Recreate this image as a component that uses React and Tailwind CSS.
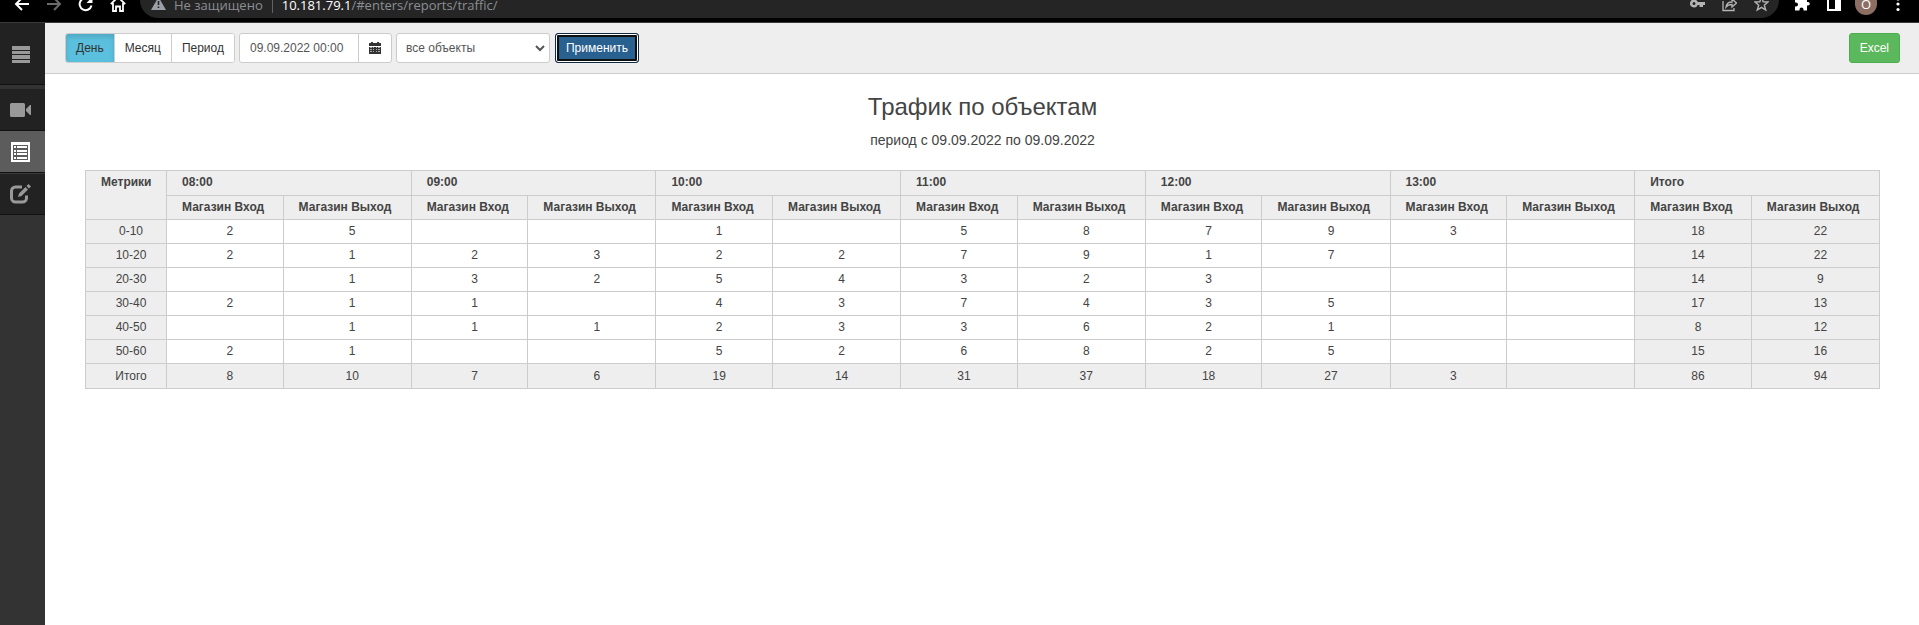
import { useState } from 'react';

const HOURS = ['08:00', '09:00', '10:00', '11:00', '12:00', '13:00', 'Итого'];

const ROWS = [
  ['0-10', 2, 5, '', '', 1, '', 5, 8, 7, 9, 3, '', 18, 22],
  ['10-20', 2, 1, 2, 3, 2, 2, 7, 9, 1, 7, '', '', 14, 22],
  ['20-30', '', 1, 3, 2, 5, 4, 3, 2, 3, '', '', '', 14, 9],
  ['30-40', 2, 1, 1, '', 4, 3, 7, 4, 3, 5, '', '', 17, 13],
  ['40-50', '', 1, 1, 1, 2, 3, 3, 6, 2, 1, '', '', 8, 12],
  ['50-60', 2, 1, '', '', 5, 2, 6, 8, 2, 5, '', '', 15, 16],
];

const TOTALS = ['Итого', 8, 10, 7, 6, 19, 14, 31, 37, 18, 27, 3, '', 86, 94];

function BrowserBar() {
  return (
    <header className="flex h-[23px] items-start border-b border-[#3a3a3a] bg-black">
      <nav className="flex w-[140px] shrink-0 text-white">
        <button aria-label="Назад" className="ml-[14px]">
          <svg width="16" height="12" viewBox="0 0 16 12" fill="none" stroke="currentColor" strokeWidth="2">
            <path d="M15 4H2.5M8 -2L2 4L8 10" />
          </svg>
        </button>
        <button aria-label="Вперёд" className="ml-[16px] text-[#6b6b6b]">
          <svg width="16" height="12" viewBox="0 0 16 12" fill="none" stroke="currentColor" strokeWidth="2">
            <path d="M1 4H13.5M8 -2L14 4L8 10" />
          </svg>
        </button>
        <button aria-label="Обновить" className="ml-[16px]">
          <svg width="16" height="12" viewBox="0 0 16 12" fill="none" stroke="currentColor" strokeWidth="2">
            <path d="M13.5 5.5A6 6 0 1 1 12 0" />
            <path d="M14.500 -3V3H8.500Z" fill="currentColor" stroke="none" />
          </svg>
        </button>
        <button aria-label="Домой" className="ml-[16px]">
          <svg width="16" height="12" viewBox="0 0 16 12" fill="none" stroke="currentColor" strokeWidth="1.8">
            <path d="M0.800 4.200L8 -3L15.200 4.200M3 3V11H6V6.500H10V11H13V3" />
          </svg>
        </button>
      </nav>
      <div className="flex h-[18px] min-w-0 grow items-start rounded-b-[18px] bg-[#252525] pr-[10px] pl-[11px]">
        <svg width="15" height="12" viewBox="0 0 15 12" className="shrink-0">
          <path d="M7.500 -3L15 10H0Z" fill="#9aa0a6" />
          <path d="M6.700 1h1.600v4H6.700zM6.700 6.500h1.600V8H6.700z" fill="#252525" />
        </svg>
        <p className="ml-2 flex h-[18px] grow items-center pb-[9px] font-['Open_Sans','Noto_Sans',sans-serif] text-[13px] leading-[18px] whitespace-nowrap text-[#8b8f93]">
          <span>Не защищено</span>
          <span className="mx-[9px] h-4 w-px bg-[#5f6368]" />
          <span className="text-white">10.181.79.1</span>
          <span>/#enters/reports/traffic/</span>
        </p>
        <div className="flex gap-[17px] text-[#b4b4b4]">
          <svg width="15" height="12" viewBox="0 0 15 12" fill="currentColor">
            <path fillRule="evenodd" d="M4 -.5A4 4 0 1 0 7.700 5H9.500V7H13V5H15V2H7.700A4 4 0 0 0 4 -.5ZM4 2a1.500 1.500 0 1 1 0 3a1.500 1.500 0 0 1 0-3Z" />
          </svg>
          <svg width="15" height="12" viewBox="0 0 15 12" fill="none" stroke="currentColor" strokeWidth="1.3">
            <path d="M1 1V10.500H12V8M4 7C4.500 3 7 2 10 2V-1L14.500 3L10 7V4.500C7.500 4.500 5.500 5 4 7Z" />
          </svg>
          <svg width="15" height="12" viewBox="0 0 15 12" fill="none" stroke="currentColor" strokeWidth="1.4">
            <path d="M7.500 -3L9.200 1.800L14 2L10.300 5.200L11.700 10L7.500 7.300L3.300 10L4.700 5.200L1 2L5.800 1.800Z" />
          </svg>
        </div>
      </div>
      <div className="flex w-[140px] shrink-0 items-start text-white">
        <svg width="15" height="12" viewBox="0 0 15 12" fill="currentColor" className="ml-[16px]">
          <path d="M0 -3H12V2H13A1.800 1.800 0 0 1 13 5.600H12V10.500H8.500V9.500A2 2 0 0 0 4.500 9.500V10.500H0V6.500H1A1.900 1.900 0 0 0 1 2.500H0Z" />
        </svg>
        <svg width="14" height="12" viewBox="0 0 14 12" className="ml-[17px]">
          <path d="M1 -2V10H13V-2" fill="none" stroke="currentColor" strokeWidth="2" />
          <path d="M8 0H14V11H8Z" fill="currentColor" />
        </svg>
        <span className="ml-[14px] flex h-[15px] w-[22px] items-start justify-center rounded-b-full bg-[#8d6e63] font-['Open_Sans',sans-serif] text-[13px] leading-[9px]">
          O
        </span>
        <svg width="4" height="12" viewBox="0 0 4 12" fill="currentColor" className="ml-[19px]">
          <circle cx="2" cy="-1" r="1.600" />
          <circle cx="2" cy="4" r="1.600" />
          <circle cx="2" cy="9.500" r="1.600" />
        </svg>
      </div>
    </header>
  );
}

function Sidebar() {
  return (
    <nav className="w-[45px] shrink-0 bg-[#333] text-[#999]">
      <a href="#menu" aria-label="Меню" className="flex h-[62px] items-center justify-center border-b border-[#111] bg-[#222] pt-[2px]">
        <svg width="20" height="18" viewBox="0 0 20 18" fill="currentColor" className="-ml-[3px]">
          <path d="M1 0H19V4H1ZM1 5H19V8H1ZM1 9H19V13H1ZM1 14H19V17H1Z" />
        </svg>
      </a>
      <a href="#video" aria-label="Видео" className="mt-[4px] flex h-[42px] items-center justify-center border-b border-[#111] bg-[#222]">
        <svg width="22" height="14" viewBox="0 0 22 14" fill="currentColor" className="-ml-[3px]">
          <path d="M1.500 0H13.500A1.500 1.500 0 0 1 15 1.500V12.500A1.500 1.500 0 0 1 13.500 14H1.500A1.500 1.500 0 0 1 0 12.500V1.500A1.500 1.500 0 0 1 1.500 0ZM16 6L20 2H21V12H20L16 8Z" />
        </svg>
      </a>
      <a href="#reports" aria-label="Отчёты" className="flex h-[42px] items-center justify-center border-b border-[#111] bg-[#5c5c5c] text-white">
        <svg width="20" height="20" viewBox="0 0 20 20" className="-ml-[3px]">
          <path d="M0 0H19V20H0Z" fill="currentColor" />
          <path d="M2 3H17V18H2Z" fill="#5c5c5c" />
          <path d="M3 4H5V6H3ZM6 4H16V6H6ZM3 8H5V10H3ZM6 8H16V10H6ZM3 11H5V13H3ZM6 11H16V13H6ZM3 15H5V17H3ZM6 15H16V17H6Z" fill="currentColor" />
        </svg>
      </a>
      <a href="#edit" aria-label="Редактировать" className="flex h-[42px] items-center justify-center border-y border-t-[#3a3a3a] border-b-[#111] bg-[#222]">
        <svg width="22" height="20" viewBox="0 0 22 20" className="-ml-[3px]">
          <path d="M12 3H5.500A4 4 0 0 0 1.500 7V14A4 4 0 0 0 5.500 18H12.500A4 4 0 0 0 16.500 14V11.500" fill="none" stroke="currentColor" strokeWidth="3" />
          <path d="M8 13L9 9.500L15.500 3L18 5.500L11.500 12ZM16.500 2L18.500 0L21 2.500L19 4.500Z" fill="currentColor" />
        </svg>
      </a>
    </nav>
  );
}

function Toolbar() {
  const [mode, setMode] = useState('День');
  const modes = ['День', 'Месяц', 'Период'];
  return (
    <form
      className="flex items-start border-b border-[#ccc] bg-[#eee] py-[10px] pr-[19px] pl-5 text-[12px] leading-[18px]"
      onSubmit={(e) => e.preventDefault()}
    >
      <div className="flex h-[30px] overflow-hidden rounded-[3px] border border-[#ccc] bg-white">
        {modes.map((m) => (
          <button
            key={m}
            type="button"
            onClick={() => setMode(m)}
            className={
              m === mode
                ? 'bg-[#5bc0de] px-[10px] text-[#333] shadow-[inset_0_3px_5px_rgba(0,0,0,0.125)]'
                : 'border-l border-[#ccc] bg-white px-[10px] text-[#333]'
            }
          >
            {m}
          </button>
        ))}
      </div>
      <div className="ml-1 flex h-[30px] rounded-[3px] border border-[#ccc] bg-white">
        <input
          aria-label="Дата"
          defaultValue="09.09.2022 00:00"
          className="w-[118px] rounded-l-[3px] bg-white px-[10px] text-[#555] outline-none"
        />
        <button type="button" aria-label="Календарь" className="flex items-center border-l border-[#ccc] px-[10px] text-[#333]">
          <svg width="12" height="12" viewBox="0 0 12 12" shapeRendering="crispEdges">
            <path
              d="M2 0H4V1H8V0H10V1H12V4H0V1H2ZM0 5H12V12H0Z"
              fill="currentColor"
            />
            <path
              d="M1 5H3V6H1ZM4 5H5V6H4ZM7 5H8V6H7ZM9 5H11V6H9ZM1 7H3V8H1ZM4 7H5V8H4ZM7 7H8V8H7ZM9 7H11V8H9ZM1 9H3V10H1ZM4 9H5V10H4ZM7 9H8V10H7ZM9 9H11V10H9Z"
              fill="#aaa"
            />
          </svg>
        </button>
      </div>
      <div className="ml-1 grid">
        <select
          aria-label="Объекты"
          className="col-start-1 row-start-1 h-[30px] w-[154px] appearance-none rounded-[3px] border border-[#ccc] bg-white px-[9px] text-[#555]"
        >
          <option>все объекты</option>
        </select>
        <svg
          width="10"
          height="7"
          viewBox="0 0 10 7"
          fill="none"
          stroke="#555"
          strokeWidth="2"
          className="pointer-events-none col-start-1 row-start-1 mr-[5px] self-center justify-self-end"
        >
          <path d="M1 1L5 5L9 1" />
        </svg>
      </div>
      <button className="ml-[5px] h-[30px] rounded-[3px] border border-[#122b40] bg-[#286090] px-[10px] text-white shadow-[inset_0_0_0_1px_#fff,inset_0_0_0_3px_#101010]">
        Применить
      </button>
      <button type="button" className="ml-auto h-[30px] rounded-[3px] border border-[#4cae4c] bg-[#5cb85c] px-[10px] text-white">
        Excel
      </button>
    </form>
  );
}

function Report() {
  const cell = 'border border-[#ccc] pl-[10px] text-center';
  return (
    <section className="pt-5 pr-[39px] pl-10">
      <h1 className="text-center text-[24px] leading-[26px]">Трафик по объектам</h1>
      <p className="mt-[10px] text-center text-[14px] leading-5">период с 09.09.2022 по 09.09.2022</p>
      <table className="mt-5 w-full table-fixed border-collapse text-[12px] leading-[17px]">
        <colgroup>
          <col className="w-[81px]" />
          {HOURS.flatMap((h) => [<col key={h + 'in'} className="w-[6.5%]" />, <col key={h + 'out'} />])}
        </colgroup>
        <thead className="bg-[#eee]">
          <tr className="h-[25px] text-left align-top">
            <th rowSpan={2} className="border border-[#ccc] pt-[3px] pl-[15px]">Метрики</th>
            {HOURS.map((h) => (
              <th key={h} colSpan={2} className="border border-[#ccc] px-[15px] pt-[3px]">{h}</th>
            ))}
          </tr>
          <tr className="h-6 text-left">
            {HOURS.flatMap((h) => [
              <th key={h + 'in'} className="border border-[#ccc] pl-[15px] whitespace-nowrap">Магазин Вход</th>,
              <th key={h + 'out'} className="border border-[#ccc] pl-[15px] whitespace-nowrap">Магазин Выход</th>,
            ])}
          </tr>
        </thead>
        <tbody>
          {ROWS.map((row) => (
            <tr key={row[0]} className="h-6">
              {row.map((v, i) => (
                <td key={i} className={i === 0 || i > 12 ? `${cell} bg-[#eee]` : cell}>
                  {v}
                </td>
              ))}
            </tr>
          ))}
        </tbody>
        <tfoot className="bg-[#eee]">
          <tr className="h-[25px]">
            {TOTALS.map((v, i) => (
              <td key={i} className={cell}>{v}</td>
            ))}
          </tr>
        </tfoot>
      </table>
    </section>
  );
}

export default function App() {
  return (
    <div className="flex min-h-screen flex-col bg-white font-['Liberation_Sans',Arial,sans-serif] text-[#444]">
      <BrowserBar />
      <div className="flex grow">
        <Sidebar />
        <main className="min-w-0 grow">
          <Toolbar />
          <Report />
        </main>
      </div>
    </div>
  );
}
